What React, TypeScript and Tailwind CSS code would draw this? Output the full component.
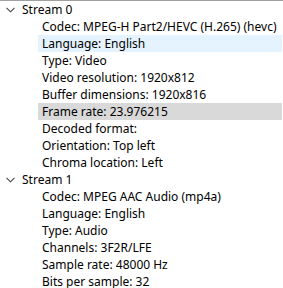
import React from 'react';

type Stream = { name: string; props: string[] };

const streams: Stream[] = [
  {
    name: 'Stream 0',
    props: [
      'Codec: MPEG-H Part2/HEVC (H.265) (hevc)',
      'Language: English',
      'Type: Video',
      'Video resolution: 1920x812',
      'Buffer dimensions: 1920x816',
      'Frame rate: 23.976215',
      'Decoded format:',
      'Orientation: Top left',
      'Chroma location: Left',
    ],
  },
  {
    name: 'Stream 1',
    props: [
      'Codec: MPEG AAC Audio (mp4a)',
      'Language: English',
      'Type: Audio',
      'Channels: 3F2R/LFE',
      'Sample rate: 48000 Hz',
      'Bits per sample: 32',
    ],
  },
];

const Chevron = () => (
  <svg width="9" height="6" viewBox="0 0 9 6" className="text-[#444]">
    <path d="M0.5 0.8 L4.5 4.8 L8.5 0.8" fill="none" stroke="currentColor" strokeWidth="1.1" />
  </svg>
);

const App: React.FC = () => {
  return (
    <div className="w-[283px] h-[288px] overflow-hidden bg-white border-t border-[#a0a0a0] font-['Segoe_UI','Noto_Sans',sans-serif] text-[12px] text-black">
      {streams.map((s, si) => (
        <div key={s.name}>
          <div className="h-[17px] flex items-center">
            <div className="w-[22px] flex justify-center pl-[4px] pr-[5px]">
              <Chevron />
            </div>
            <span className="leading-[17px]">{s.name}</span>
          </div>
          {s.props.map((p, pi) => {
            const hover = si === 0 && pi === 1;
            const selected = si === 0 && pi === 5;
            return (
              <div key={p} className="h-[17px] pl-[38px] pr-[1px]">
                <div
                  className={
                    'h-[17px] pl-[4px] leading-[17px] whitespace-nowrap ' +
                    (hover ? 'bg-[#e5f3ff]' : selected ? 'bg-[#d9d9d9]' : '')
                  }
                >
                  {p}
                </div>
              </div>
            );
          })}
        </div>
      ))}
    </div>
  );
};

export default App;
